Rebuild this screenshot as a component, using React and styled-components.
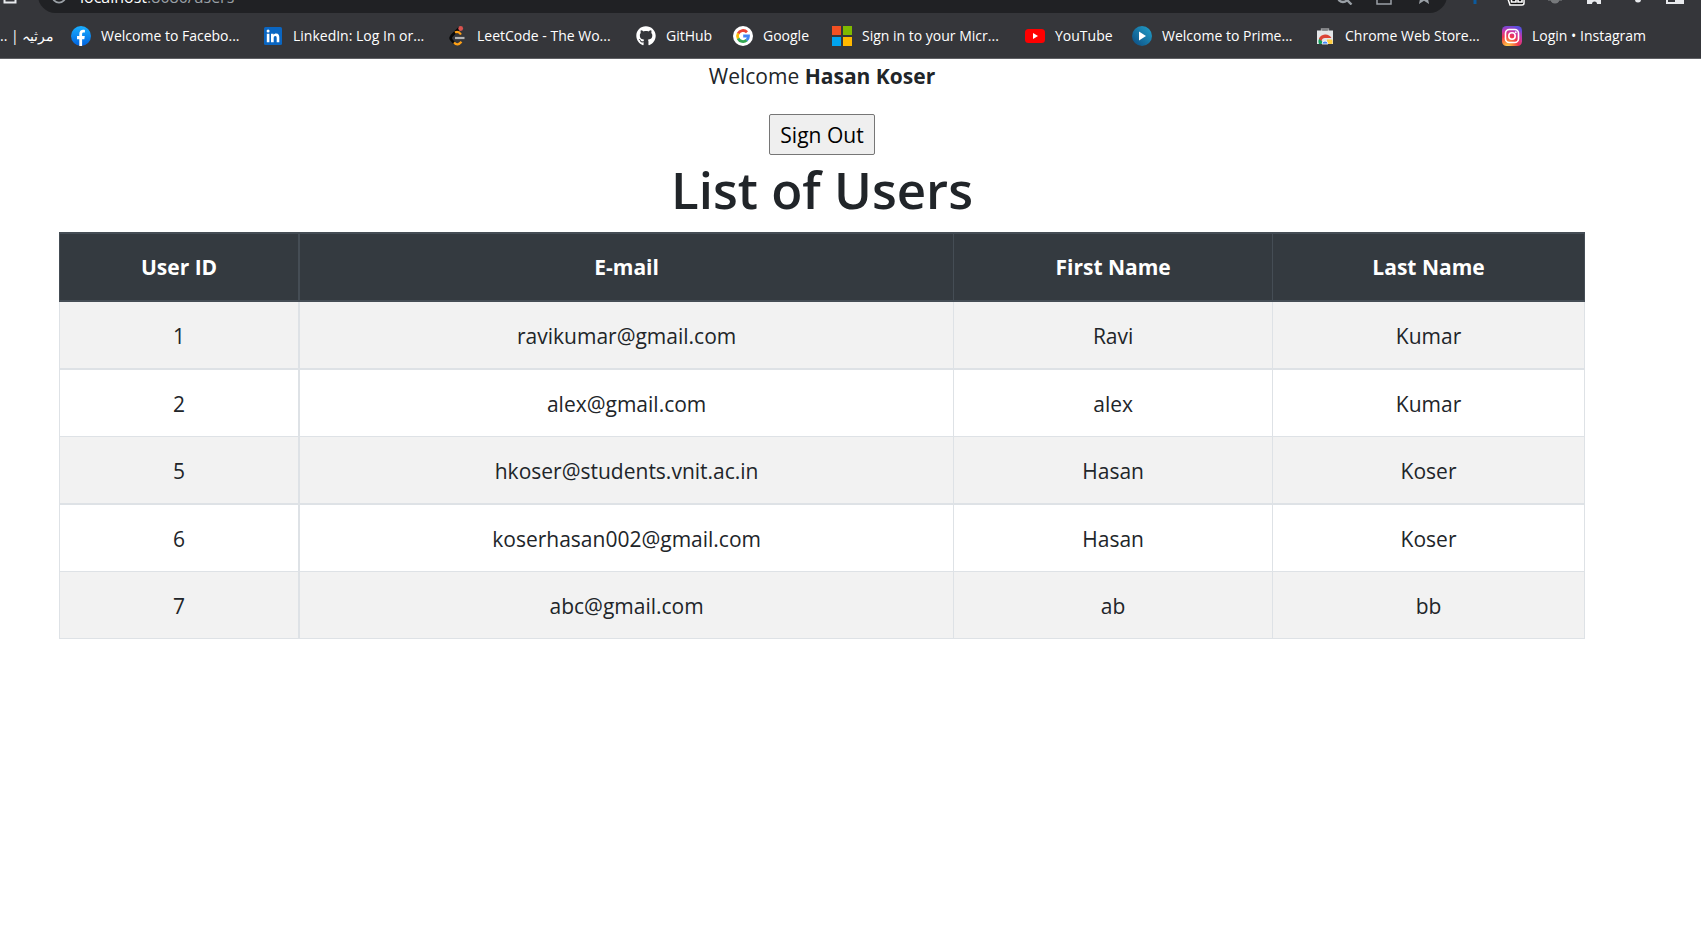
import React from 'react';
import styled, { createGlobalStyle } from 'styled-components';
import { FaGithub } from 'react-icons/fa';

const Global = createGlobalStyle`
  *, *::before, *::after { box-sizing: border-box; }
  body {
    margin: 0;
    background: #fff;
    color: #212529;
    font-family: 'Open Sans', 'Segoe UI', sans-serif;
    font-size: 21px;
    line-height: 34px;
    overflow-x: hidden;
  }
`;

const Chrome = styled.header`
  background: #35363a;
  border-bottom: 1px solid #5f6064;
  overflow: hidden;
`;

const Toolbar = styled.div`
  display: flex;
  align-items: flex-end;
  height: 13px;
  padding-right: 6px;
  overflow: hidden;
`;

const ToolButton = styled.button`
  display: flex;
  align-items: center;
  justify-content: center;
  flex: none;
  width: ${(p) => p.$width || 40}px;
  height: 35px;
  padding: 0;
  border: 0;
  background: none;
`;

const Omnibox = styled.div`
  display: flex;
  align-items: center;
  flex: 1;
  height: 35px;
  margin: 0 8px 0 18px;
  padding-right: 3px;
  border-radius: 18px;
  background: #202124;
`;

const Address = styled.a`
  flex: 1;
  padding-top: 3px;
  color: #9aa0a6;
  font-size: 16px;
  line-height: 32px;
  text-decoration: none;
`;

const Host = styled.span`
  color: #fff;
`;

const Bookmarks = styled.nav`
  display: flex;
  align-items: center;
  height: 45px;
  overflow: hidden;
`;

const Bookmark = styled.a`
  display: flex;
  align-items: center;
  flex: none;
  gap: 10px;
  width: ${(p) => p.$width}px;
  color: #fff;
  font-size: 14px;
  line-height: 20px;
  white-space: nowrap;
  text-decoration: none;
  svg { flex: none; }
`;

const Page = styled.main`
  padding: 0 116px 40px 59px;
  text-align: center;
`;

const Welcome = styled.p`
  margin: 0 0 21px;
`;

const SignOut = styled.button`
  display: block;
  height: 41px;
  margin: 0 auto;
  padding: 0 10px;
  border: 1px solid #767676;
  border-radius: 2px;
  background: #efefef;
  color: #000;
  font: inherit;
`;

const Title = styled.h1`
  margin: 0 0 9px;
  font-size: 51px;
  font-weight: 600;
  line-height: 68px;
`;

const Table = styled.table`
  width: 100%;
  table-layout: fixed;
  border-collapse: separate;
  border-spacing: 0;
`;

const Column = styled.col`
  width: ${(p) => p.$share}%;
`;

const HeadCell = styled.th`
  padding: 16px;
  border: solid #454d55;
  border-width: 2px 1px 2px 0;
  background: #343a40;
  color: #fff;
  font-weight: 700;
  &:first-child { border-right-width: 2px; border-left-width: 1px; }
`;

const Cell = styled.td`
  padding: 17px 16px 15px;
  border: solid #dee2e6;
  border-width: 0 1px 1px 0;
  &:first-child { border-right-width: 2px; border-left-width: 1px; }
`;

const Row = styled.tr`
  &:nth-child(odd) { background: #f2f2f2; }
  &:nth-child(odd):not(:last-child) > td { border-bottom-width: 2px; }
`;

const HomeIcon = () => (
  <svg width="18" height="18" viewBox="0 0 18 18" fill="none" stroke="#e8eaed" strokeWidth="2">
    <path d="M3.500 7v8.500h11V7M1 9l8-7.500L17 9" />
  </svg>
);

const InfoIcon = () => (
  <svg width="16" height="16" viewBox="0 0 16 16" fill="none" stroke="#9aa0a6" strokeWidth="1.800">
    <circle cx="8" cy="8" r="6.600" />
    <path d="M8 7v4M8 4v1.500" />
  </svg>
);

const SearchIcon = () => (
  <svg width="18" height="18" viewBox="0 0 18 18" fill="none" stroke="#9aa0a6" strokeWidth="2.400">
    <circle cx="8" cy="10" r="5" />
    <path d="m11.500 12.500 5 5" />
  </svg>
);

const ShareIcon = () => (
  <svg width="18" height="18" viewBox="0 0 18 18" fill="none" stroke="#9aa0a6" strokeWidth="1.500">
    <path d="M2 6v11h14v-4M6 12c0-4 3-6 7-6M10 2l5 4-5 4" />
  </svg>
);

const StarIcon = () => (
  <svg width="18" height="18" viewBox="0 0 18 18">
    <path d="m9 1 2.300 5.500 5.900.5-4.500 3.900L14.100 17 9 13.700 3.900 17l1.400-6.100L.8 7l5.900-.5z" fill="#9aa0a6" />
  </svg>
);

const PinIcon = () => (
  <svg width="18" height="18" viewBox="0 0 18 18">
    <path d="M7.500 0h3v17h-3z" fill="#0b5a9d" />
  </svg>
);

const CounterIcon = () => (
  <svg width="20" height="20" viewBox="0 0 20 20">
    <path d="M0 13h3l2 6h12q2 0 2-2v-6H4z" fill="#111" stroke="#fff" strokeWidth="1.500" />
    <path d="M6.500 9h4.500v7H6.500zM13 9h4v7h-4z" fill="none" stroke="#fff" strokeWidth="1.600" />
  </svg>
);

const LampIcon = () => (
  <svg width="18" height="18" viewBox="0 0 18 18" fill="#77797c">
    <circle cx="9" cy="12" r="4.500" />
    <path d="M2 12.500h14v1.500H2z" opacity=".6" />
  </svg>
);

const PuzzleIcon = () => (
  <svg width="18" height="18" viewBox="0 0 18 18" fill="#e8eaed">
    <path d="M1 4h5a2.500 2.500 0 0 1 5 0h4v4a2.500 2.500 0 0 1 0 5v4h-4a2.500 2.500 0 0 0-5 0H1v-4.500a2.500 2.500 0 0 0 0-5z" />
  </svg>
);

const MusicIcon = () => (
  <svg width="18" height="18" viewBox="0 0 18 18" fill="#e8eaed">
    <circle cx="12" cy="12.500" r="3" />
    <path d="M13 2h2v10h-2z" />
  </svg>
);

const PanelIcon = () => (
  <svg width="18" height="18" viewBox="0 0 18 18">
    <path d="M1 2h16v14H1z" fill="none" stroke="#e8eaed" strokeWidth="2" />
    <path d="M9 2h8v14H9z" fill="#e8eaed" />
  </svg>
);

const FacebookLogo = () => (
  <svg width="20" height="20" viewBox="0 0 20 20">
    <defs><linearGradient id="fb" x2="0" y2="1"><stop stopColor="#19afff" /><stop offset="1" stopColor="#0062e0" /></linearGradient></defs>
    <circle cx="10" cy="10" r="10" fill="url(#fb)" />
    <path d="M8.300 20v-6.800H6V10h2.300V8c0-2.700 1.500-4.200 3.900-4.200.8 0 1.700.2 1.700.2v2.600h-1.300c-1.100 0-1.500.7-1.500 1.500V10h2.700l-.5 3.200h-2.200V20z" fill="#fff" />
  </svg>
);

const LinkedInLogo = () => (
  <svg width="20" height="20" viewBox="0 0 20 20">
    <rect x="1" y="1" width="18" height="18" rx="1.500" fill="#0a66c2" />
    <path d="M3.800 7.800h2.600v8.400H3.800zM5.100 3.600a1.500 1.500 0 1 1 0 3 1.500 1.500 0 0 1 0-3zM8 7.800h2.500V9c.5-.8 1.400-1.400 2.600-1.400 2.600 0 3.200 1.700 3.200 4v4.600h-2.600v-4.100c0-1 0-2.200-1.400-2.200s-1.600 1.100-1.600 2.200v4.100H8z" fill="#fff" />
  </svg>
);

const LeetCodeLogo = () => (
  <svg width="20" height="20" viewBox="0 0 20 20" fill="none" strokeWidth="2.200">
    <path d="M12.500 2 4.500 10q-1.800 2 0 4l3 3.500" stroke="#090909" strokeWidth="2.600" />
    <path d="M8 6.500q3.500-1.800 6 2M7 16.500q3.500 4 7.500-.8" stroke="#ffa116" />
    <path d="M8 12h9.500" stroke="#b3b3b3" />
    <circle cx="13.700" cy="2.500" r="2.400" fill="#d9534f" />
  </svg>
);

const GoogleLogo = () => (
  <svg width="20" height="20" viewBox="0 0 20 20" fill="none" strokeWidth="2.800">
    <circle cx="10" cy="10" r="10" fill="#fff" />
    <path d="M5.100 7.600A5.500 5.500 0 0 1 14 6.200" stroke="#ea4335" />
    <path d="M5.200 12.600a5.500 5.500 0 0 1 0-5.200" stroke="#fbbc05" />
    <path d="M13.700 14.100a5.500 5.500 0 0 1-8.600-1.600" stroke="#34a853" />
    <path d="M10.200 10h5.300a5.400 5.400 0 0 1-1.900 4.200" stroke="#4285f4" />
  </svg>
);

const MicrosoftLogo = () => (
  <svg width="20" height="20" viewBox="0 0 20 20">
    <path d="M0 0h9v9H0z" fill="#f25022" />
    <path d="M11 0h9v9h-9z" fill="#7fba00" />
    <path d="M0 11h9v9H0z" fill="#00a4ef" />
    <path d="M11 11h9v9h-9z" fill="#ffb900" />
  </svg>
);

const YouTubeLogo = () => (
  <svg width="20" height="20" viewBox="0 0 20 20">
    <rect y="3" width="20" height="14" rx="3.500" fill="#f00" />
    <path d="m8 7 5 3-5 3z" fill="#fff" />
  </svg>
);

const PrimeLogo = () => (
  <svg width="20" height="20" viewBox="0 0 20 20">
    <defs><linearGradient id="pv" x1="0" y1="1" x2="1" y2="0"><stop stopColor="#0c4a80" /><stop offset="1" stopColor="#22a2cc" /></linearGradient></defs>
    <circle cx="10" cy="10" r="10" fill="url(#pv)" />
    <path d="m7 5.500 7 4.500-7 4.500z" fill="#fff" />
  </svg>
);

const WebStoreLogo = () => (
  <svg width="20" height="20" viewBox="0 0 20 20">
    <path d="M6.500 5V3h7v2" fill="none" stroke="#9a9c9f" strokeWidth="1.400" />
    <path d="M2 4.500h16V18H2z" fill="#e4e6e8" />
    <path d="M4 18a6 6 0 0 1 .9-6.300L8 17v1z" fill="#0f9d58" />
    <path d="M3.900 12.800a7 7 0 0 1 12.600-.8H10a3.500 3.500 0 0 0-3.400 3z" fill="#db4437" />
    <path d="M12 13.500h5.200a7 7 0 0 1 0 4.500H12z" fill="#ffcd40" />
    <path d="M7 18a3 3 0 0 1 6 0z" fill="#4285f4" stroke="#fff" strokeWidth=".8" />
  </svg>
);

const InstagramLogo = () => (
  <svg width="20" height="20" viewBox="0 0 20 20" fill="none" stroke="#fff" strokeWidth="1.600">
    <defs>
      <radialGradient id="ig" cx=".28" cy="1.050" r="1.100">
        <stop stopColor="#fd5" /><stop offset=".25" stopColor="#fb8c3c" /><stop offset=".5" stopColor="#f0364f" /><stop offset=".75" stopColor="#c837ab" /><stop offset="1" stopColor="#5b4fe0" />
      </radialGradient>
    </defs>
    <rect width="20" height="20" rx="4.500" fill="url(#ig)" stroke="none" />
    <rect x="3.500" y="3.500" width="13" height="13" rx="3.800" />
    <circle cx="10" cy="10" r="3.200" />
    <circle cx="13.800" cy="6.200" r=".9" fill="#fff" stroke="none" />
  </svg>
);

const extensions = [
  { name: 'Pin', icon: <PinIcon /> },
  { name: 'Counter', icon: <CounterIcon /> },
  { name: 'Lamp', icon: <LampIcon /> },
  { name: 'Extensions', icon: <PuzzleIcon /> },
  { name: 'Media', icon: <MusicIcon /> },
  { name: 'Side panel', icon: <PanelIcon /> },
];

const bookmarks = [
  { label: '.. | مرثیہ', width: 71 },
  { label: 'Welcome to Facebo...', width: 192, icon: <FacebookLogo /> },
  { label: 'LinkedIn: Log In or...', width: 184, icon: <LinkedInLogo /> },
  { label: 'LeetCode - The Wo...', width: 189, icon: <LeetCodeLogo /> },
  { label: 'GitHub', width: 97, icon: <FaGithub size={20} /> },
  { label: 'Google', width: 99, icon: <GoogleLogo /> },
  { label: 'Sign in to your Micr...', width: 193, icon: <MicrosoftLogo /> },
  { label: 'YouTube', width: 107, icon: <YouTubeLogo /> },
  { label: 'Welcome to Prime...', width: 183, icon: <PrimeLogo /> },
  { label: 'Chrome Web Store...', width: 187, icon: <WebStoreLogo /> },
  { label: 'Login • Instagram', width: 147, icon: <InstagramLogo /> },
];

const columns = [
  { title: 'User ID', share: 15.8 },
  { title: 'E-mail', share: 42.86 },
  { title: 'First Name', share: 20.9 },
  { title: 'Last Name', share: 20.44 },
];

const users = [
  ['1', 'ravikumar@gmail.com', 'Ravi', 'Kumar'],
  ['2', 'alex@gmail.com', 'alex', 'Kumar'],
  ['5', 'hkoser@students.vnit.ac.in', 'Hasan', 'Koser'],
  ['6', 'koserhasan002@gmail.com', 'Hasan', 'Koser'],
  ['7', 'abc@gmail.com', 'ab', 'bb'],
];

export default function App() {
  return (
    <>
      <Global />
      <Chrome>
        <Toolbar>
          <ToolButton type="button" aria-label="Home" $width={20}><HomeIcon /></ToolButton>
          <Omnibox>
            <ToolButton type="button" aria-label="Site information" $width={42}><InfoIcon /></ToolButton>
            <Address href="#"><Host>localhost</Host>:8080/users</Address>
            <ToolButton type="button" aria-label="Zoom"><SearchIcon /></ToolButton>
            <ToolButton type="button" aria-label="Share"><ShareIcon /></ToolButton>
            <ToolButton type="button" aria-label="Bookmark this page"><StarIcon /></ToolButton>
          </Omnibox>
          {extensions.map((e) => (
            <ToolButton key={e.name} type="button" aria-label={e.name}>{e.icon}</ToolButton>
          ))}
        </Toolbar>
        <Bookmarks aria-label="Bookmarks">
          {bookmarks.map((b) => (
            <Bookmark key={b.label} href="#" $width={b.width}>{b.icon}{b.label}</Bookmark>
          ))}
        </Bookmarks>
      </Chrome>
      <Page>
        <Welcome>Welcome <b>Hasan Koser</b></Welcome>
        <SignOut type="button">Sign Out</SignOut>
        <Title>List of Users</Title>
        <Table>
          <colgroup>{columns.map((c) => <Column key={c.title} $share={c.share} />)}</colgroup>
          <thead>
            <tr>{columns.map((c) => <HeadCell key={c.title} scope="col">{c.title}</HeadCell>)}</tr>
          </thead>
          <tbody>
            {users.map((u) => (
              <Row key={u[0]}>{u.map((v, i) => <Cell key={i}>{v}</Cell>)}</Row>
            ))}
          </tbody>
        </Table>
      </Page>
    </>
  );
}
